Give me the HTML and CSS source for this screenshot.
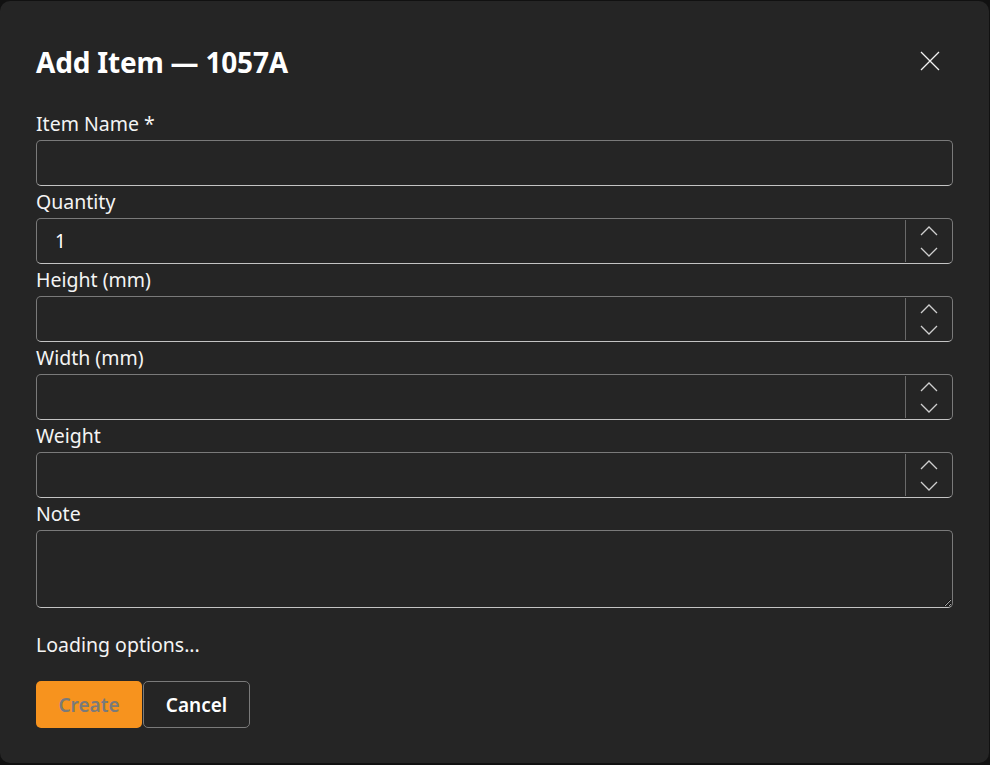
FILE: index.html
```html
<!DOCTYPE html>
<html lang="en">
<head>
  <meta charset="UTF-8" />
  <meta name="viewport" content="width=device-width, initial-scale=1.0"/>
  <title>Add Item</title>
  <link rel="stylesheet" href="styles.css">
</head>
<body>
  <div class="modal">
    <div class="modal-header">
      <h1>Add Item — 1057A</h1>
      <button class="close-button" aria-label="Close">
        <svg width="20" height="20" viewBox="0 0 20 20">
          <path d="M1 1 L19 19 M19 1 L1 19" stroke="#f2f2f2" stroke-width="1.3" fill="none"/>
        </svg>
      </button>
    </div>

    <form class="item-form">
      <label class="field-label">Item Name *</label>
      <div class="input-box"><input type="text"></div>

      <label class="field-label">Quantity</label>
      <div class="input-box">
        <input type="text" value="1">
        <div class="spinner">
          <svg width="18" height="10" viewBox="0 0 18 10"><path d="M1 9 L9 1 L17 9" stroke="#cfcfcf" stroke-width="1.3" fill="none"/></svg>
          <svg width="18" height="10" viewBox="0 0 18 10"><path d="M1 1 L9 9 L17 1" stroke="#cfcfcf" stroke-width="1.3" fill="none"/></svg>
        </div>
      </div>

      <label class="field-label">Height (mm)</label>
      <div class="input-box">
        <input type="text">
        <div class="spinner">
          <svg width="18" height="10" viewBox="0 0 18 10"><path d="M1 9 L9 1 L17 9" stroke="#cfcfcf" stroke-width="1.3" fill="none"/></svg>
          <svg width="18" height="10" viewBox="0 0 18 10"><path d="M1 1 L9 9 L17 1" stroke="#cfcfcf" stroke-width="1.3" fill="none"/></svg>
        </div>
      </div>

      <label class="field-label">Width (mm)</label>
      <div class="input-box">
        <input type="text">
        <div class="spinner">
          <svg width="18" height="10" viewBox="0 0 18 10"><path d="M1 9 L9 1 L17 9" stroke="#cfcfcf" stroke-width="1.3" fill="none"/></svg>
          <svg width="18" height="10" viewBox="0 0 18 10"><path d="M1 1 L9 9 L17 1" stroke="#cfcfcf" stroke-width="1.3" fill="none"/></svg>
        </div>
      </div>

      <label class="field-label">Weight</label>
      <div class="input-box">
        <input type="text">
        <div class="spinner">
          <svg width="18" height="10" viewBox="0 0 18 10"><path d="M1 9 L9 1 L17 9" stroke="#cfcfcf" stroke-width="1.3" fill="none"/></svg>
          <svg width="18" height="10" viewBox="0 0 18 10"><path d="M1 1 L9 9 L17 1" stroke="#cfcfcf" stroke-width="1.3" fill="none"/></svg>
        </div>
      </div>

      <label class="field-label">Note</label>
      <div class="input-box textarea-box">
        <textarea></textarea>
      </div>

      <p class="loading">Loading options...</p>

      <div class="actions">
        <button type="button" class="create-button" disabled>Create</button>
        <button type="button" class="cancel-button">Cancel</button>
      </div>
    </form>
  </div>
</body>
</html>
```

FILE: styles.css
```css
* {
  box-sizing: border-box;
  margin: 0;
  padding: 0;
}

body {
  font-family: 'Noto Sans', 'Open Sans', sans-serif;
  background: #111111;
  width: 990px;
  height: 765px;
  overflow: hidden;
  padding-top: 1px;
}

.modal {
  width: 989px;
  height: 762px;
  background: #252525;
  border-radius: 10px;
  padding: 0 36px;
  color: #ffffff;
}

.modal-header {
  display: flex;
  justify-content: space-between;
  align-items: center;
  height: 111px;
  padding-top: 10px;
}

h1 {
  font-size: 28px;
  font-weight: 700;
  letter-spacing: -0.2px;
}

.close-button {
  background: none;
  border: none;
  width: 20px;
  height: 20px;
  margin-right: 13px;
  margin-bottom: 2px;
  cursor: pointer;
}

.item-form {
  display: flex;
  flex-direction: column;
  width: 917px;
}

.field-label {
  font-size: 19.5px;
  line-height: 24px;
  margin: 4px 0 4px;
  color: #f4f4f4;
}

.item-form .field-label:first-child {
  margin-top: 0;
}

.input-box {
  display: flex;
  height: 46px;
  border: 1px solid #7a7a7a;
  border-bottom-color: #c4c4c4;
  border-radius: 5px;
  background: #252525;
}

.input-box input {
  flex: 1;
  background: transparent;
  border: none;
  outline: none;
  color: #ffffff;
  font-family: inherit;
  font-size: 19px;
  padding: 0 18px;
}

.spinner {
  width: 47px;
  display: flex;
  flex-direction: column;
  justify-content: center;
  align-items: center;
  gap: 11px;
  border-left: 1px solid #6a6a6a;
  margin: 1px 0;
}

.textarea-box {
  height: 78px;
}

.textarea-box textarea {
  flex: 1;
  background: transparent;
  border: none;
  outline: none;
  color: #ffffff;
  font-family: inherit;
  font-size: 19px;
  resize: vertical;
}

.loading {
  font-size: 19.5px;
  margin-top: 24px;
  line-height: 26px;
  color: #f4f4f4;
}

.actions {
  display: flex;
  gap: 1px;
  margin-top: 23px;
}

.actions button {
  height: 47px;
  border-radius: 5px;
  font-family: inherit;
  font-size: 19px;
  font-weight: 600;
  cursor: pointer;
}

.create-button {
  width: 106px;
  background: #f7931e;
  border: none;
  color: #7a7a7a;
}

.cancel-button {
  width: 107px;
  background: #252525;
  border: 1px solid #7a7a7a;
  color: #ffffff;
}
```
